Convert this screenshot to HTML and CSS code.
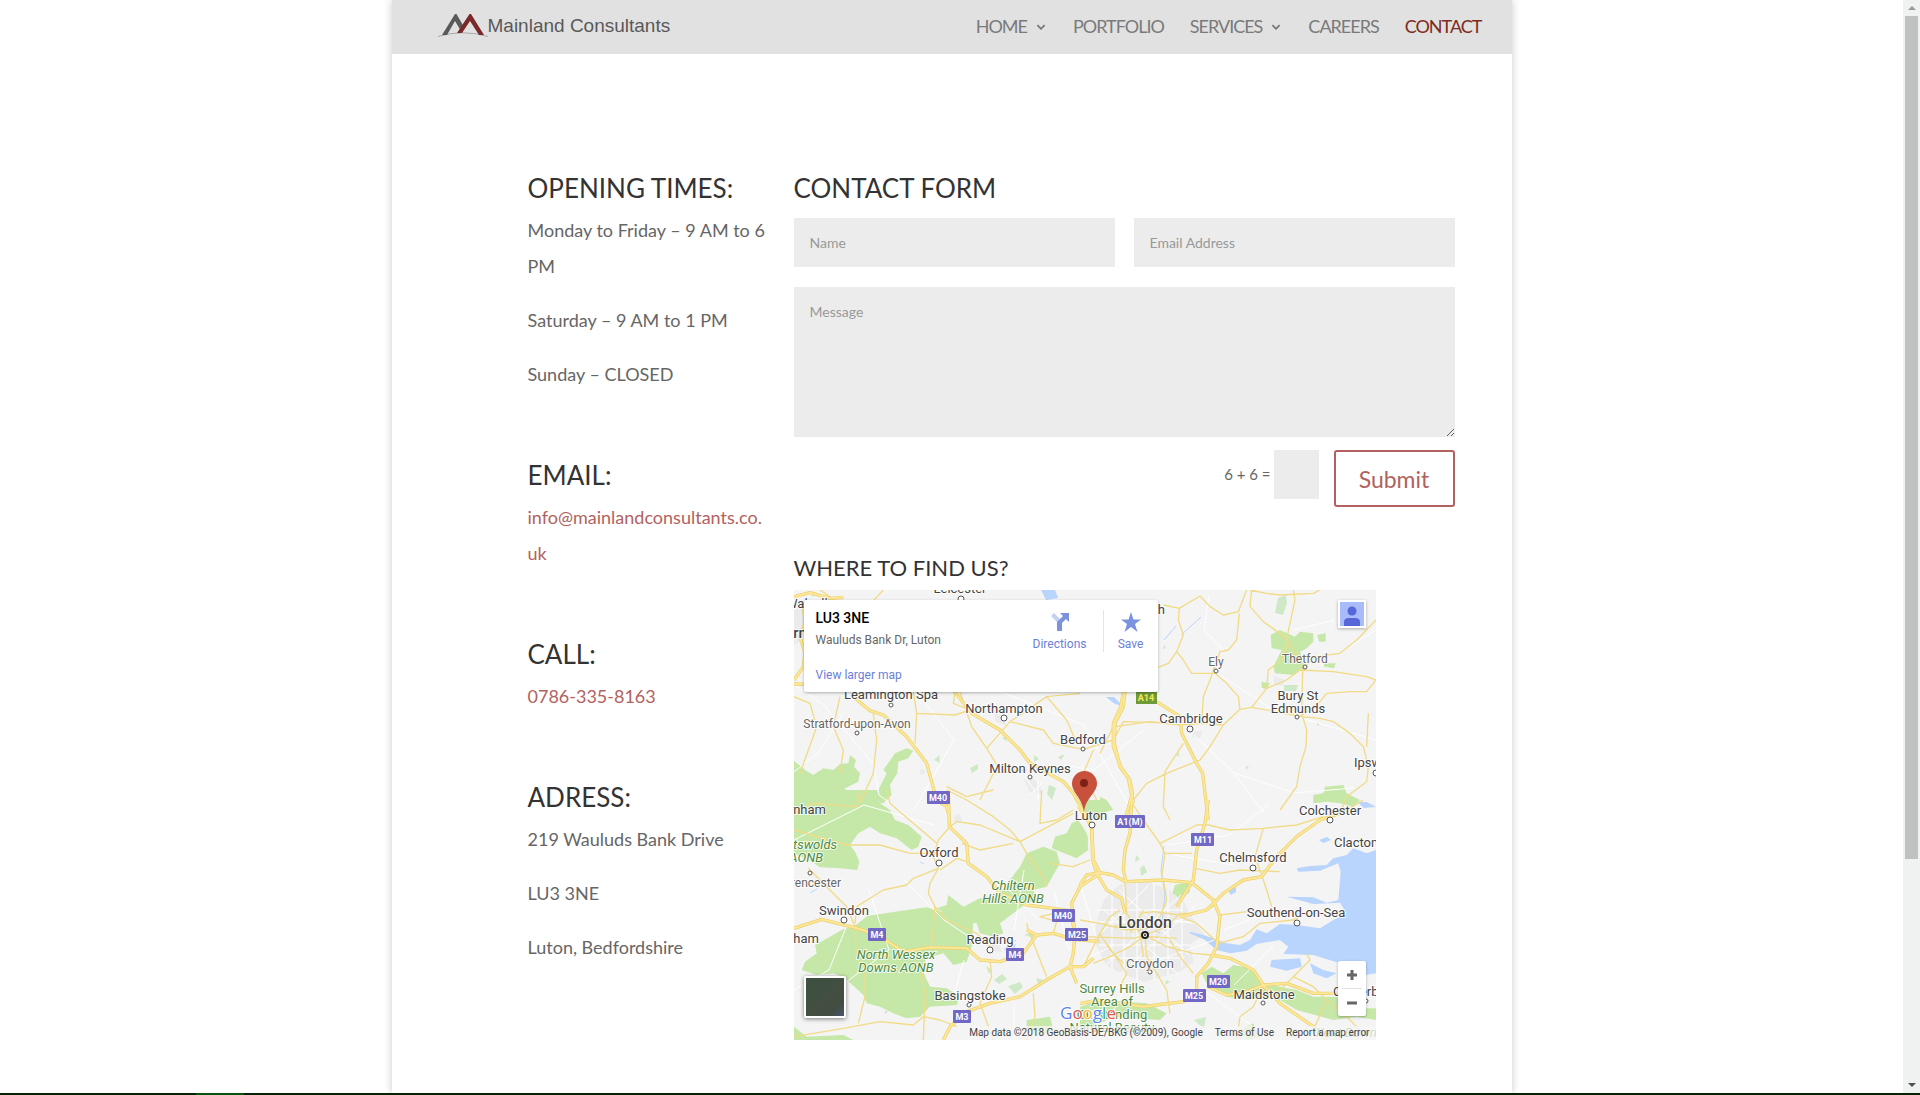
FILE: index.html
```html
<!DOCTYPE html>
<html lang="en">
<head>
<meta charset="utf-8">
<meta name="viewport" content="width=device-width, initial-scale=1">
<title>Contact | Mainland Consultants</title>
<link rel="stylesheet" href="styles.css">
</head>
<body>
<div class="viewport">
  <div class="page">
    <header class="site-header">
      <a class="logo" href="#">
        <svg class="logo-mark" viewBox="0 0 50 24" aria-hidden="true">
          <path d="M0 22.500Q25 15 50 22.500" fill="none" stroke="#aaa" stroke-width="1"/>
          <path d="M4 21L17 0h1.500L26 13l-3 4-6-10-8 14z" fill="#595959"/>
          <path d="M19 19L31.500 0h1.500L46 21h-5L32 7l-8 12z" fill="#7b2828"/>
        </svg>
        <span>Mainland Consultants</span>
      </a>
      <nav class="menu" aria-label="Main">
        <a href="#">HOME <svg class="caret" viewBox="0 0 8 5"><path d="M1 1l3 3 3-3"/></svg></a>
        <a href="#">PORTFOLIO</a>
        <a href="#">SERVICES <svg class="caret" viewBox="0 0 8 5"><path d="M1 1l3 3 3-3"/></svg></a>
        <a href="#">CAREERS</a>
        <a class="current" href="#">CONTACT</a>
      </nav>
    </header>

    <main class="content">
      <aside class="details">
        <section>
          <h2>OPENING TIMES:</h2>
          <p>Monday to Friday – 9 AM to 6 PM</p>
          <p>Saturday – 9 AM to 1 PM</p>
          <p>Sunday – CLOSED</p>
        </section>
        <section>
          <h2>EMAIL:</h2>
          <p><a class="email" href="mailto:info@mainlandconsultants.co.uk">info@mainlandconsultants.co.uk</a></p>
        </section>
        <section>
          <h2>CALL:</h2>
          <p><a href="tel:07863358163">0786-335-8163</a></p>
        </section>
        <section>
          <h2>ADRESS:</h2>
          <p>219 Wauluds Bank Drive</p>
          <p>LU3 3NE</p>
          <p>Luton, Bedfordshire</p>
        </section>
      </aside>

      <div class="main-column">
        <h2>CONTACT FORM</h2>
        <form class="contact-form">
          <input class="field" type="text" placeholder="Name" aria-label="Name">
          <input class="field" type="email" placeholder="Email Address" aria-label="Email Address">
          <textarea class="field message" placeholder="Message" aria-label="Message"></textarea>
          <div class="form-end">
            <label for="captcha">6 + 6 =</label>
            <input class="field captcha" id="captcha" type="text">
            <button class="submit" type="submit">Submit</button>
          </div>
        </form>

        <h3>WHERE TO FIND US?</h3>
        <div class="map">
          <svg class="map-canvas" viewBox="0 0 582 450" role="img" aria-label="Map of Luton and surroundings">
            <rect width="582" height="450" fill="#f4f4f4"/>

            <!-- woodland and protected areas -->
            <g class="green">
              <path transform="translate(-14 -50) scale(.33333)" d="M42 662L75 690 100 705 130 685 160 690 180 672 205 670 210 645 228 660 222 680 240 700 235 725 195 745 205 790 300 790 290 760 320 700 310 690 345 640 380 625 400 632 385 655 355 665 352 700 330 735 335 765 310 790H42z"/>
              <path transform="translate(-14 200) scale(.33333)" d="M42 0H290L300 40 330 60 345 90 385 105 425 140 415 170 395 180 350 145 300 130 270 110 235 130 210 165 225 185 238 215 232 240 180 235 120 232 95 215 42 190zM228 405L262 378 340 366 440 352 500 370 540 390 580 400 575 470 560 515 520 525 490 490 440 505 425 535 450 590 500 595 540 620 530 645 450 650 420 680 380 685 340 670 300 650 260 640 250 615 190 560 160 550 110 555 65 540 75 515 110 490 105 465 150 440 185 420zM470 355L500 345 505 315 550 350 600 325 640 330 690 270 720 230 740 190 790 170 830 185 840 220 800 290 760 300 770 330 740 340 700 370 660 400 670 430 640 440 600 430 590 400 540 395zM815 175L825 140 860 130 875 100 895 90 920 130 925 180 890 205zM895 40L920 30H960V90L930 85zM42 710L80 740 190 735 220 750H42zM740 690L810 680 820 720 790 735 740 725z"/>
              <path transform="translate(306 -10) scale(.33333)" d="M512 165L540 150 585 170 600 155 640 160 640 185 620 205 600 215 615 260 580 285 525 280 520 260 545 210 515 205zM652 165l25-5 0 25-20 0zM672 250l35 0-5 15-30-5zM485 305l25 5-10 18-15-5zM640 645L670 640 675 620 730 615 740 640 780 660 760 680 720 670 680 665 640 670zM0 650L20 660 40 690 0 700z"/>
              <path transform="translate(286 210) scale(.33333)" d="M0 90L25 110 20 150 0 150zM365 520L395 500 430 520 460 495 510 505 545 550 600 560 650 570 700 590 770 590 790 625 888 625V660L830 650 760 660 650 630 600 600 560 590 500 600 440 590 385 560zM0 620L60 600 200 610 260 640 240 660 100 650 40 680 0 690zM270 300L285 255 325 245 330 275 300 300 290 330zM480 690l40-20 20 40-40 10z"/>
            </g>
            <g class="scrub">
              <path d="M18 2l4 3-4 2zM140 170l5-5 1 8zM240 165l5 4-5 3zM208 148l4-2 1 6zM176 178l8-4 0 5-6 4zM255 195l7 3-4 12-5-6zM264 167l7-3-4 6zM490 95l14 0-2 6-12 0zM484 8l8-3 1 8-4 12-8-2zM370 55l2 3-3 1zM382 165l3-3 0 5zM523 132l3 2-3 2zM200 390l8-6 5 5-8 5zM214 396l12-4 3 5-8 7zM242 388l8 2-5 6zM192 376l6 4-3 4zM230 345l9-3 1 6zM346 278l4-3 3 7-6 4zM342 265l4 4-5 3zM400 430l12-3-2 12zM330 375l4 0-1 4zM372 390l4 2-5 3zM90 421l4 0-2 3zM452 176l3 1-3 3z"/>
            </g>

            <!-- built-up areas -->
            <g class="urban">
              <path d="M310 310L325 295 350 290 375 300 390 312 400 330 410 345 395 355 400 372 385 382 350 392 330 385 312 375 300 350 303 330z"/>
              <path d="M230 190l8-3 8 8 2 10-12-3zM0 20l14-5 8 20-12 15-10 5zM480 86l12 4-4 6-8-2zM193 355l12 0 3 7-14-1zM160 226l6-2 2 8-8 0zM200 123l10 4 2 8-10-3zM400 141l8 0-2 8-8-2zM125 180l4-2 3 5-5 2z"/>
            </g>

            <!-- sea and rivers -->
            <g class="water">
              <path transform="translate(286 210) scale(.33333)" d="M888 150L860 160 820 145 800 165 760 175 740 195 690 198 650 205 655 215 720 212 775 190 782 215 775 300 740 308 700 292 620 290 700 312 780 308 800 340 760 360 720 385 650 375 600 372 560 400 530 388 510 420 480 435 440 430 370 405 330 395 330 400 375 420 410 450 450 460 500 452 530 432 600 420 625 440 610 462 700 465 780 490 858 525 888 520zM575 480L660 475 665 500 620 512 570 500zM690 490L730 510 770 520 740 535 700 520z"/>
              <path d="M434 300l8-3 0 5-5 3zM525 250l8-3 4 3-8 3zM312 107l8 0 8 8-4 0zM247 0h14l3 8-12 2zM563 212l10 0 9 5-12 1zM312 107l8 2 2 6zM222 353l-6 8 4-1z"/>
              <path class="river" d="M370 256l-3 24 4 24-3 30M370 50l12-14M387 45l20-18M210 360l12-10M16 303l7-4M126 272l4 2M366 343l-10-6-12 4"/>
            </g>

            <!-- minor roads -->
            <g class="minor">
              <path d="M0 95l30 20 50 60 5 30 40 30M50 122l-25 40-25 20M90 60l70 90-40 70M120 105l70-10 100 40 50 90M430 60l-20-20 5-35M425 85l55 35 102 30M400 145l40 38 60 20 60-5M440 183l30 40M350 140l-50 40-30-5M0 250l70-35 70 20M75 300l20 60-60 45M110 290l40 40 30 20M55 330l-20 50-35 20M230 280l-10 60M215 300l30 30M475 215l-40 30-60 10M380 265l60 10M430 340l50-20M480 355l-40 40M330 400l-20 40M410 400l60 45M220 415l0 35M170 370l-10 35M550 60l32-20M500 40l40-10"/>
              <path d="M303 320h85M300 332h100M305 355h90M310 368h80M318 300v80M330 296v92M343 292v100M360 292v98M374 300v85M388 312v65M305 345l50-50M312 375l75-70M325 385l75-68M310 320l75 65M325 300l70 65M232 188l10 15M236 205l12-12M244 190l0 20M288 300l15 50M260 300l15 60M365 370l55-20M380 330l30 5M290 370l30-15"/>
            </g>

            <!-- main roads -->
            <g class="aroad">
              <path transform="translate(-14 -50) scale(.33333)" d="M120 150L165 180M310 150L280 182M400 455L410 520 405 610M410 520L525 525 570 510M540 456L575 560 620 625 660 690M620 625L690 545 800 470 900 460M525 455L520 490 570 510M690 545L790 570 820 610 910 628 1000 600 1030 545 1135 548M800 470L860 540 890 610M280 520L290 600 280 700 240 790M180 470L160 560 190 630 180 700M42 470L90 490 110 560 60 700M600 780L640 700 740 690M500 740L560 770 640 750M940 630L910 700 950 780M960 640L1000 560"/>
              <path transform="translate(306 -10) scale(.33333)" d="M190 75L238 85 300 48 330 80 370 105 415 95 440 30M238 85L235 120 250 165 230 215 250 240 275 280 345 280 380 310 415 350 420 388 370 435 305 430 240 435 150 425 45 440M305 430L310 350 330 300 360 215 385 210 410 180 418 100M455 30L450 80 490 125 560 175 570 130 585 60 580 30M560 175L600 240 608 270 605 400 620 450 618 500 600 560 590 620 540 690M450 30L500 40 540 45 640 40 660 30M420 388L455 382 530 395 600 410 660 415 700 425 750 460 790 500 805 560 800 605 740 650 720 700M455 382L500 325 560 300 600 270 700 275 800 290 828 300M828 300L800 335 750 335 680 340 660 365 600 410M500 325L505 270 545 240 565 180M608 270L640 230 720 220 770 180 828 120M370 435L330 500 300 540 200 580 140 610 100 660M250 490L195 575 190 680 210 720M805 400L800 500M175 262L205 250 230 215"/>
              <path transform="translate(-14 200) scale(.33333)" d="M510 110L530 95 600 105 720 155 880 70M720 155L690 120 640 80 560 30 500 0M720 155L740 190 790 260 800 290M880 60L830 90 780 100 785 0M510 110L475 150 460 200 475 235 450 280 445 310 465 350 455 470M470 160L400 100 330 40 320 0M465 190L390 190 300 165 200 165 42 120M475 235L400 265 380 285 310 300 230 350 225 400M85 235L140 290 200 350 225 410 228 500 255 540 255 620 235 700M425 540L435 620 430 750M42 740L190 715 300 695 400 705 430 680 480 690 530 710M630 510L635 560 600 640 640 750M760 610L765 680 740 750M480 240L530 205 560 215M545 160L600 180 700 160M42 60L100 40 230 50 240 0M800 560L745 420 740 400M465 350L500 390 590 430 630 470M820 430L830 395 780 380 870 360M810 220L880 230 930 210"/>
              <path transform="translate(286 210) scale(.33333)" d="M385 75L450 90 550 85 650 75 730 50M550 85L525 170 545 225 560 270 575 320M345 205L420 220 480 210 600 215M385 75L350 75 240 130 255 160 245 230M240 130L190 60 150 0M255 160L335 160M135 250L140 340 180 400 190 470M0 360L60 370 140 390 200 385M0 410L80 412 160 415 195 405 260 380 300 340 340 340 400 320M195 405L260 440 340 460 395 465M195 405L200 470 230 520 260 570 270 640M195 405L150 440 90 470 40 490M120 330L90 350 60 400 90 450 130 490M200 385L240 350 260 300 250 240M300 350L350 370 415 430 490 410 540 370 640 360 690 330M420 345L500 335M550 600L600 570 640 530 690 480 680 460M640 530L700 560 740 600 700 690M550 555L520 620 480 650 470 720M180 340L220 335 300 345M100 380L170 370M150 400L190 330M270 420L300 470 340 520M80 430L140 520 120 560M210 410L290 415M60 400L10 500M850 0L800 30 760 40M850 700L810 660 740 600"/>
            </g>

            <!-- motorways: dark casing, light centre line -->
            <defs>
              <g id="motorways">
                <path transform="translate(-14 -50) scale(.33333)" d="M42 170L90 158 150 175 190 172M70 190L75 250 60 290 75 340 70 380 42 420M42 432L100 433M220 470L270 512 310 525 380 590 440 670 470 780 500 800 505 820M515 445L575 520 660 570 720 630 750 670 850 725 880 760 935 860M1035 456L1030 500 1005 550 1003 610 1020 680 1045 715 1060 790"/>
                <path transform="translate(-14 200) scale(.33333)" d="M505 0L508 110 560 160 565 220 620 260 660 310 740 345 820 355 870 362 885 430M960 250L900 290 875 340 885 430 880 490 870 530 890 580M42 415L125 388 220 412 290 433 370 485 450 472 560 475 600 510 660 515 730 490 770 435 820 430 880 448 960 455M490 750L510 710 560 665 630 640 720 620 800 570 870 530 910 530 940 505M225 412L300 440M770 435L740 420M895 50L935 110 940 210 960 250"/>
                <path transform="translate(306 -10) scale(.33333)" d="M70 336L62 380 40 430 40 500 62 560 90 600 97 640 75 720M170 365L240 410 245 460 290 550 308 580 315 640 325 720"/>
                <path transform="translate(286 210) scale(.33333)" d="M155 0L150 100 135 150 130 210 138 245M385 0L375 70 350 150 340 240 290 320M0 255L20 225 60 218 100 225 135 245 250 240 335 248 400 300 420 350 410 440 385 490 350 530 350 580 310 605 230 615 190 620 60 600 0 610M395 465L450 475 520 510 550 555 620 550 700 580 770 580M550 555L600 610 700 680 740 720M35 75L38 180 50 220 80 270 125 295 135 340M300 350L380 330 430 280 490 240 545 230 590 170 650 110 720 60 780 40M385 560L440 585 500 575 550 555"/>
              </g>
            </defs>
            <use href="#motorways" class="casing"/>
            <use href="#motorways" class="centre"/>

            <!-- road numbers -->
            <g class="shields">
              <g fill="#7168c6">
                <rect x="133" y="201" width="23" height="13" rx="1"/><rect x="74" y="338" width="18" height="13" rx="1"/><rect x="212" y="358" width="18" height="13" rx="1"/><rect x="159" y="420" width="18" height="13" rx="1"/><rect x="258" y="319" width="23" height="13" rx="1"/><rect x="271" y="338" width="23" height="13" rx="1"/><rect x="321" y="225" width="30" height="13" rx="1"/><rect x="397" y="243" width="23" height="13" rx="1"/><rect x="413" y="385" width="23" height="13" rx="1"/><rect x="389" y="399" width="23" height="13" rx="1"/>
              </g>
              <rect x="342" y="101" width="21" height="13" fill="#6f9a3a"/>
              <g class="shield-text">
                <text x="144" y="211">M40</text><text x="83" y="348">M4</text><text x="221" y="368">M4</text><text x="168" y="430">M3</text><text x="269" y="329">M40</text><text x="283" y="348">M25</text><text x="336" y="235">A1(M)</text><text x="409" y="253">M11</text><text x="424" y="395">M20</text><text x="400" y="409">M25</text><text x="352" y="111" fill="#f4ea52">A14</text>
              </g>
            </g>

            <!-- place names -->
            <g class="towns">
              <g class="dots">
                <circle cx="167" cy="9" r="3"/><circle cx="97" cy="115" r="2"/><circle cx="63" cy="143" r="2"/><circle cx="210" cy="128" r="3"/><circle cx="289" cy="159" r="2"/><circle cx="236" cy="187" r="2"/><circle cx="396" cy="139" r="3"/><circle cx="422" cy="81" r="2"/><circle cx="511" cy="77" r="2"/><circle cx="503" cy="127" r="2"/><circle cx="582" cy="183" r="3"/><circle cx="536" cy="230" r="3"/><circle cx="459" cy="278" r="3"/><circle cx="503" cy="333" r="3"/><circle cx="356" cy="382" r="2"/><circle cx="469" cy="413" r="2"/><circle cx="572" cy="411" r="2"/><circle cx="145" cy="273" r="3"/><circle cx="16" cy="283" r="2"/><circle cx="50" cy="330" r="3"/><circle cx="196" cy="360" r="3"/><circle cx="175" cy="415" r="2"/><circle cx="298" cy="235" r="3"/>
              </g>
              <circle cx="351" cy="345" r="3" fill="#fff" stroke="#222" stroke-width="2"/><circle cx="351" cy="345" r="1" fill="#222"/>
              <text x="166" y="3">Leicester</text>
              <text class="from" x="-8" y="18">Walsall</text>
              <text class="from city" x="-14" y="48">Birmingham</text>
              <text class="to" x="371" y="24">Peterborough</text>
              <text x="97" y="109">Leamington Spa</text>
              <text class="small" x="63" y="138">Stratford-upon-Avon</text>
              <text x="210" y="123">Northampton</text>
              <text x="289" y="154">Bedford</text>
              <text x="236" y="183">Milton Keynes</text>
              <text x="397" y="133">Cambridge</text>
              <text class="small" x="422" y="76">Ely</text>
              <text class="small" x="511" y="73">Thetford</text>
              <text x="504" y="110">Bury St</text><text x="504" y="123">Edmunds</text>
              <text class="from" x="560" y="177">Ipswich</text>
              <text x="536" y="225">Colchester</text>
              <text class="from" x="540" y="257">Clacton-on-Sea</text>
              <text x="459" y="272">Chelmsford</text>
              <text x="502" y="327">Southend-on-Sea</text>
              <text class="capital" x="351" y="338">London</text>
              <text class="grey" x="356" y="378">Croydon</text>
              <text x="470" y="409">Maidstone</text>
              <text class="from" x="539" y="406">Canterbury</text>
              <text x="145" y="267">Oxford</text>
              <text class="to" x="32" y="224">Cheltenham</text>
              <text class="small to" x="47" y="297">Cirencester</text>
              <text x="50" y="325">Swindon</text>
              <text class="to" x="25" y="353">Chippenham</text>
              <text x="196" y="354">Reading</text>
              <text x="176" y="410">Basingstoke</text>
              <text x="297" y="230">Luton</text>
              <g class="parks">
                <text class="to" x="43" y="259">Cotswolds</text><text class="to" x="29" y="272">AONB</text>
                <text x="219" y="300">Chiltern</text><text x="219" y="313">Hills AONB</text>
                <text x="102" y="369">North Wessex</text><text x="102" y="382">Downs AONB</text>
                <text class="from" x="522" y="447">Kent Downs</text>
                <g class="upright"><text x="318" y="403">Surrey Hills</text><text x="318" y="416">Area of</text><text x="318" y="429">Outstanding</text><text x="318" y="442">Natural Beauty</text></g>
              </g>
            </g>

            <path d="M290 222C288 207 278 203 278 193.500A12.500 12.500 0 0 1 303 193.500C303 203 292 207 290 222z" fill="#c8513c"/>
            <circle cx="290" cy="193" r="4" fill="#7d2015"/>
            <text class="google" x="266" y="429"><tspan fill="#5b84e8">G</tspan><tspan fill="#e2574c">o</tspan><tspan fill="#efb73e">o</tspan><tspan fill="#5b84e8">g</tspan><tspan fill="#4da965">l</tspan><tspan fill="#e2574c">e</tspan></text>
          </svg>

          <div class="place-card">
            <div class="place-text">
              <strong>LU3 3NE</strong>
              <span>Wauluds Bank Dr, Luton</span>
              <a href="#">View larger map</a>
            </div>
            <a class="place-action directions" href="#">
              <svg viewBox="0 0 20 20"><path d="M1 4l3-3 7 7-3 3z" fill="#c3cff4"/><path d="M10 1h9v9l-3-3-4 4v8H7v-9l6-6z" fill="#7b92df"/></svg>
              Directions
            </a>
            <a class="place-action save" href="#">
              <svg viewBox="0 0 20 20"><path d="M10 0l2.500 7.500H20l-6 4.500 2.500 8L10 15l-6.500 5L6 12 0 7.500h7.500z" fill="#7b92df"/></svg>
              Save
            </a>
          </div>
          <button class="account" type="button" aria-label="Account">
            <svg viewBox="0 0 24 24"><rect width="24" height="24" fill="#a9bbfb"/><circle cx="12" cy="9" r="4.500" fill="#5767d8"/><path d="M4 24v-4q0-4 5-4h6q5 0 5 4v4z" fill="#5767d8"/></svg>
          </button>
          <button class="satellite" type="button" aria-label="Satellite view"></button>
          <div class="zoom">
            <button type="button" aria-label="Zoom in"><svg viewBox="0 0 12 12"><path d="M6 1v10M1 6h10"/></svg></button>
            <button type="button" aria-label="Zoom out"><svg viewBox="0 0 12 12"><path d="M1 6h10"/></svg></button>
          </div>
          <div class="attribution">
            <span>Map data ©2018 GeoBasis-DE/BKG (©2009), Google</span>
            <a href="#">Terms of Use</a>
            <a href="#">Report a map error</a>
          </div>
        </div>
      </div>
    </main>
  </div>
  <div class="scrollbar" aria-hidden="true">
    <svg viewBox="0 0 8 4"><path d="M0 4l4-4 4 4z" fill="#999"/></svg>
    <span class="thumb"></span>
    <svg viewBox="0 0 8 4"><path d="M0 0l4 4 4-4z" fill="#505050"/></svg>
  </div>
</div>
<div class="taskbar" aria-hidden="true"><span></span></div>
</body>
</html>
```
FILE: styles.css
```css
* { box-sizing: border-box; }

body {
  margin: 0;
  min-height: 100vh;
  display: flex;
  flex-direction: column;
  background: #fff;
  color: #666;
  font: 18px/36px Lato, sans-serif;
}

a { color: #b2625e; text-decoration: none; }
h2, h3 { margin: 0; color: #333; font-weight: 400; line-height: 26px; }
h2 { font-size: 26px; padding-bottom: 11px; }
h3 { font-size: 22px; padding: 48px 0 9px; }
p { margin: 0 0 18px; }
p:last-child { margin-bottom: 0; }
button, input, textarea { font: inherit; border: 0; border-radius: 0; }

.viewport { flex: 1; display: grid; grid-template-columns: 1fr 17px; }

.page {
  width: 100%;
  max-width: 1120px;
  margin: 0 auto;
  background: #fff;
  box-shadow: 0 0 8px rgba(0, 0, 0, .22);
}

/* header */
.site-header {
  display: flex;
  justify-content: space-between;
  align-items: center;
  height: 54px;
  padding: 0 30px 2px 46px;
  background: #e1e1e1;
}
.logo {
  display: flex;
  align-items: center;
  color: #595959;
  font: 19px/24px "Liberation Sans", sans-serif;
}
.logo-mark { width: 50px; height: 24px; }
.menu { display: flex; gap: 26px; }
.menu a {
  display: flex;
  align-items: center;
  color: #7a7a7a;
  letter-spacing: -1px;
}
.menu .current { color: #7f2a20; }
.caret {
  width: 10px;
  height: 6px;
  margin: 2px 1px 0 9px;
  fill: none;
  stroke: #777;
  stroke-width: 1.5;
}

/* body */
.content {
  display: grid;
  grid-template-columns: 242px 1fr;
  gap: 24px;
  padding: 121px 57px 50px 136px;
}
.details { display: grid; gap: 70px; align-content: start; }
.email { word-break: break-all; }

/* form */
.contact-form {
  display: grid;
  grid-template-columns: 1fr 1fr;
  column-gap: 19px;
  row-gap: 20px;
  padding-top: 6px;
}
.field {
  display: block;
  width: 100%;
  height: 49px;
  padding: 16px;
  background: #ececec;
  color: #999;
  font-size: 14px;
  line-height: 17px;
}
.field::placeholder { color: #999; opacity: 1; }
.message { grid-column: 1 / -1; height: 150px; resize: vertical; }
.form-end {
  grid-column: 1 / -1;
  display: flex;
  justify-content: flex-end;
  align-items: flex-start;
  margin-top: -7px;
}
.form-end label { font-size: 15px; line-height: 49px; margin-right: 3px; }
.field.captcha { width: 45px; margin-right: 15px; }
.submit {
  width: 121px;
  height: 57px;
  border: 2px solid #b2625e;
  border-radius: 3px;
  background: #fff;
  color: #b2625e;
  font-size: 23px;
  line-height: 36px;
}

/* map */
.map {
  position: relative;
  width: 582px;
  max-width: 100%;
  overflow: hidden;
  font: 12px/16px Roboto, sans-serif;
}
.map-canvas { display: block; width: 100%; }
.map a { color: #6b7fd7; }
.green { fill: #c5e8a8; }
.scrub { fill: #cfe8c8; }
.urban { fill: #ebebeb; }
.water { fill: #b9d4fd; }
.river { fill: none; stroke: #b9d4fd; }
.minor { fill: none; stroke: #fff; stroke-width: 1; }
.aroad { fill: none; stroke: #f1db86; stroke-width: 4; stroke-linejoin: round; }
.casing { fill: none; stroke: #ecd06d; stroke-width: 10; stroke-linejoin: round; }
.centre { fill: none; stroke: #fbe795; stroke-width: 6; stroke-linejoin: round; }
.shield-text { fill: #fff; font-size: 9px; font-weight: 700; text-anchor: middle; }
.towns text {
  fill: #444;
  font-size: 13px;
  text-anchor: middle;
  paint-order: stroke;
  stroke: rgba(255, 255, 255, .8);
  stroke-width: 2px;
}
.towns .small { fill: #666; font-size: 12px; }
.towns .grey { fill: #666; }
.towns .city { font-size: 15px; font-weight: 500; }
.towns .capital { font-size: 16px; font-weight: 500; }
.towns .from { text-anchor: start; }
.towns .to { text-anchor: end; }
.dots { fill: #fff; stroke: #555; stroke-width: 1; }
.towns .parks text { fill: #4e8a3e; font-style: italic; }
.towns .parks .upright text { font-style: normal; }
.google { font: 500 17px "Open Sans", sans-serif; paint-order: stroke; stroke: #fff; stroke-width: 2px; }

.place-card {
  position: absolute;
  top: 10px;
  left: 10px;
  width: 354px;
  height: 92px;
  display: flex;
  align-items: flex-start;
  padding: 10px 0 0 12px;
  border-radius: 2px;
  background: #fff;
  box-shadow: 0 1px 3px rgba(0, 0, 0, .3);
}
.place-text { flex: 1; display: flex; flex-direction: column; }
.place-text strong { color: #000; font-size: 14px; font-weight: 500; }
.place-text span { margin: 6px 0 19px; }
.place-action { display: flex; flex-direction: column; align-items: center; gap: 4px; }
.place-action svg { width: 20px; height: 20px; margin-top: 2px; }
.directions { width: 86px; }
.save { width: 55px; border-left: 1px solid #e4e4e4; }

.account {
  position: absolute;
  top: 10px;
  right: 10px;
  width: 28px;
  height: 28px;
  padding: 2px;
  background: #fff;
  box-shadow: 0 1px 3px rgba(0, 0, 0, .3);
}
.account svg { display: block; }
.satellite {
  position: absolute;
  left: 10px;
  bottom: 22px;
  width: 42px;
  height: 42px;
  border: 2px solid #fff;
  border-radius: 2px;
  background: linear-gradient(135deg, #3f5040 0 35%, #454e40 60%, #414d42 80%, #4c5673);
  box-shadow: 0 1px 4px rgba(0, 0, 0, .5);
}
.zoom {
  position: absolute;
  right: 10px;
  bottom: 24px;
  width: 28px;
  padding: 0 4px;
  border-radius: 2px;
  background: #fff;
  box-shadow: 0 1px 3px rgba(0, 0, 0, .3);
}
.zoom button { display: block; width: 20px; height: 27px; padding: 0 4px; background: none; }
.zoom button + button { height: 28px; border-top: 1px solid #e0e0e0; }
.zoom svg { display: block; width: 12px; stroke: #666; stroke-width: 3; }
.attribution {
  position: absolute;
  right: 0;
  bottom: 0;
  display: flex;
  gap: 12px;
  padding: 0 6px 0 3px;
  background: rgba(245, 245, 245, .75);
  color: #444;
  font-size: 10px;
  line-height: 14px;
}
.attribution a { color: #444; }

/* window chrome */
.scrollbar {
  display: flex;
  flex-direction: column;
  align-items: center;
  padding: 6px 0;
  background: #f0f1f1;
}
.scrollbar svg { width: 8px; height: 4px; }
.thumb { width: 13px; height: 78%; margin: 6px 0 auto; background: #c0c1c1; }
.taskbar { height: 2px; padding-left: 196px; background: #042404; }
.taskbar span { display: block; width: 48px; height: 2px; background: #0b520b; }
```
